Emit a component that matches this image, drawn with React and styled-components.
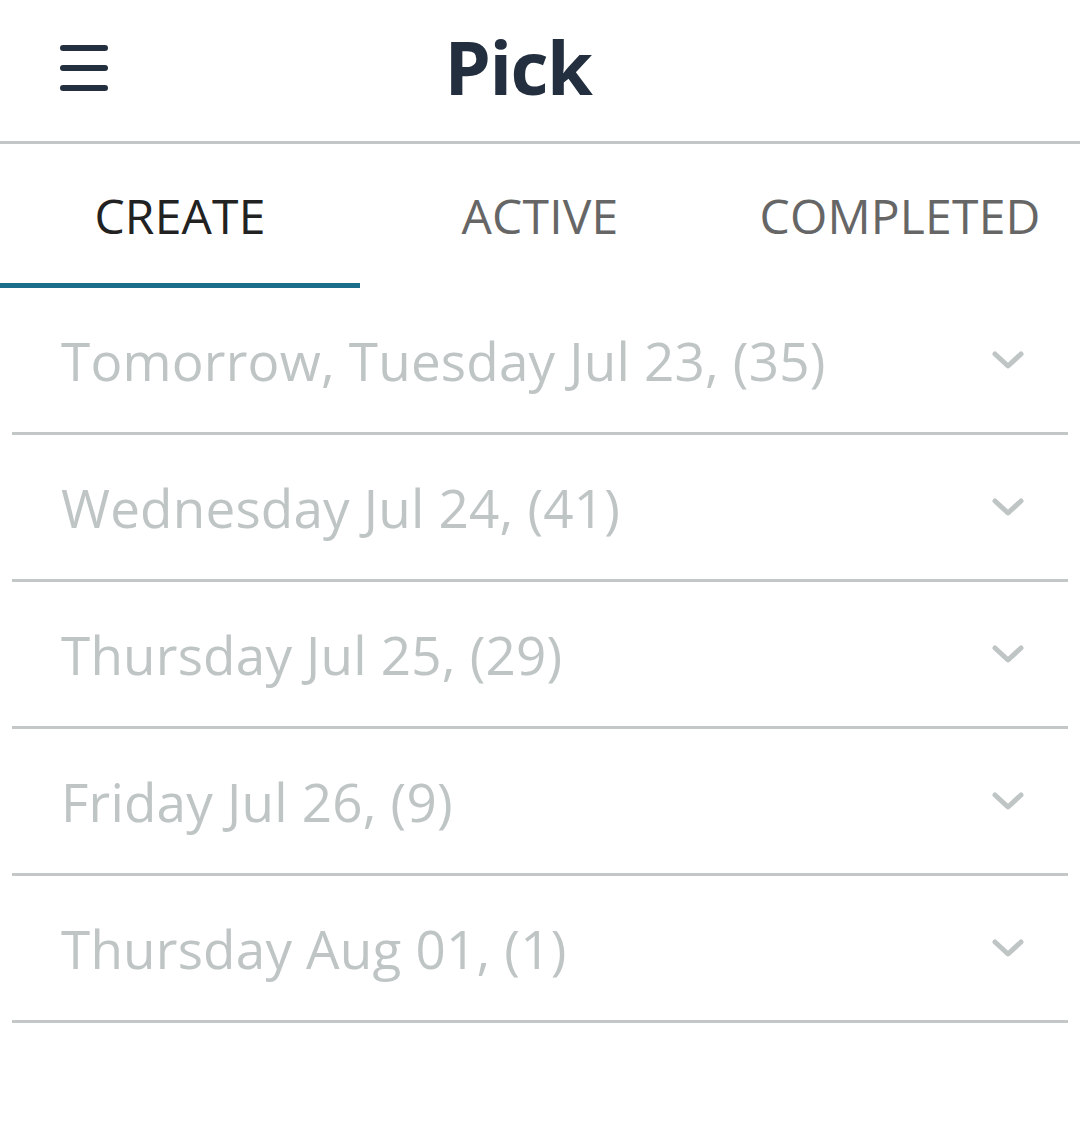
import styled, { createGlobalStyle } from 'styled-components';

const GlobalStyle = createGlobalStyle`
 html, body {
  margin: 0;
  padding: 0;
  background: #ffffff;
 }
 body {
  font-family: 'Open Sans', 'Noto Sans', sans-serif;
 }
`;

const Page = styled.div`
 width: 1080px;
 min-height: 1121px;
 background: #ffffff;
`;

const Header = styled.header`
 position: relative;
 height: 141px;
 display: flex;
 align-items: center;
 justify-content: center;
 border-bottom: 3px solid #c3c6c6;
`;

const MenuButton = styled.button`
 position: absolute;
 left: 60px;
 top: 45px;
 width: 48px;
 height: 46px;
 padding: 0;
 border: none;
 background: none;
 display: flex;
 flex-direction: column;
 justify-content: space-between;
`;

const MenuLine = styled.span`
 display: block;
 width: 48px;
 height: 6px;
 border-radius: 3px;
 background: #232f3e;
`;

const Title = styled.h1`
 margin: 0;
 font-family: 'Open Sans', sans-serif;
 font-weight: 700;
 font-size: 74px;
 color: #232f3e;
 letter-spacing: -1.5px;
 transform: translate(-22px, -4px);
`;

const Tabs = styled.nav`
 display: grid;
 grid-template-columns: repeat(3, 1fr);
 height: 144px;
`;

const Tab = styled.div`
 display: flex;
 align-items: center;
 justify-content: center;
 font-size: 48px;
 letter-spacing: 0.2px;
 color: ${({ active }) => (active ? '#222222' : '#666666')};
 border-bottom: 5px solid ${({ active }) => (active ? '#1a6e8a' : 'transparent')};
 padding-top: 4px;
`;

const List = styled.ul`
 list-style: none;
 margin: 0;
 padding: 0 12px;
`;

const Row = styled.li`
 display: flex;
 align-items: center;
 justify-content: space-between;
 height: 144px;
 padding: 0 44px 0 49px;
 border-bottom: 3px solid #c4c7c7;
`;

const RowLabel = styled.span`
 font-size: 53px;
 color: #bfc4c4;
 letter-spacing: 0.2px;
`;

const Chevron = () => (
 <svg width="32" height="22" viewBox="0 0 32 22">
  <path
   d="M3 5 L16 17 L29 5"
   fill="none"
   stroke="#bfc4c4"
   strokeWidth="5"
   strokeLinecap="round"
   strokeLinejoin="round"
  />
 </svg>
);

const days = [
 'Tomorrow, Tuesday Jul 23, (35)',
 'Wednesday Jul 24, (41)',
 'Thursday Jul 25, (29)',
 'Friday Jul 26, (9)',
 'Thursday Aug 01, (1)',
];

const App = () => {
 return (
  <Page>
   <GlobalStyle />
   <Header>
    <MenuButton aria-label='menu'>
     <MenuLine />
     <MenuLine />
     <MenuLine />
    </MenuButton>
    <Title>Pick</Title>
   </Header>
   <Tabs>
    <Tab active>CREATE</Tab>
    <Tab>ACTIVE</Tab>
    <Tab>COMPLETED</Tab>
   </Tabs>
   <List>
    {days.map((day) => (
     <Row key={day}>
      <RowLabel>{day}</RowLabel>
      <Chevron />
     </Row>
    ))}
   </List>
  </Page>
 );
};

export default App;
